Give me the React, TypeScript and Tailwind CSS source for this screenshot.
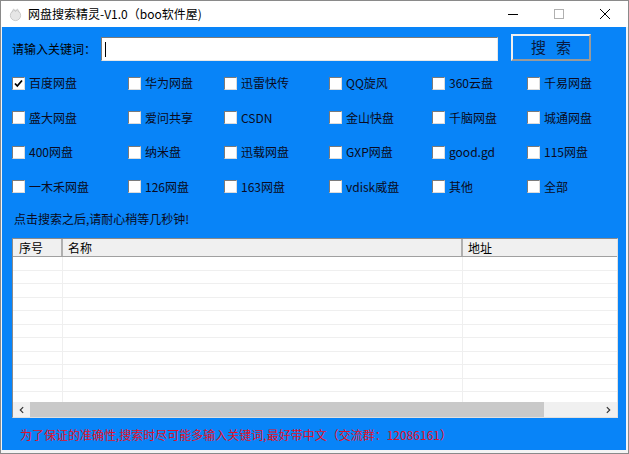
import React from "react";

const rows: string[][] = [
  ["百度网盘", "华为网盘", "迅雷快传", "QQ旋风", "360云盘", "千易网盘"],
  ["盛大网盘", "爱问共享", "CSDN", "金山快盘", "千脑网盘", "城通网盘"],
  ["400网盘", "纳米盘", "迅载网盘", "GXP网盘", "good.gd", "115网盘"],
  ["一木禾网盘", "126网盘", "163网盘", "vdisk威盘", "其他", "全部"],
];

function Box({ checked }: { checked?: boolean }) {
  return (
    <span className="relative inline-block w-[13px] h-[13px] shrink-0 bg-white border border-t-[#7a7a7a] border-l-[#7a7a7a] border-r-[#dcdcdc] border-b-[#dcdcdc]">
      {checked && (
        <svg viewBox="0 0 11 11" className="absolute left-0 top-0 w-[11px] h-[11px]">
          <path d="M2 5.5 L4.3 8 L9 2.5" stroke="#000" strokeWidth="1.8" fill="none" />
        </svg>
      )}
    </span>
  );
}

export default function App() {
  const font = { fontFamily: '"Noto Sans CJK SC", "Noto Sans", sans-serif' };
  return (
    <div className="w-[629px] h-[454px] bg-[#f4f4f4] border border-[#8a8a8a] flex flex-col overflow-hidden" style={font}>
      {/* title bar */}
      <div className="h-[26px] bg-white flex items-center shrink-0">
        <svg viewBox="0 0 16 16" className="w-[15px] h-[15px] ml-[7px] mr-[5px]">
          <circle cx="8" cy="9" r="5.5" fill="#e6e6e6" stroke="#c8c8c8" />
          <path d="M4 6 L6 2 L8 5 L10 2 L12 6" stroke="#c8c8c8" fill="none" />
        </svg>
        <span className="text-[12px] text-black leading-none">网盘搜索精灵-V1.0（boo软件屋)</span>
        <div className="ml-auto flex items-center h-full">
          <div className="w-[46px] h-full flex items-center justify-center">
            <div className="w-[10px] h-px bg-black" />
          </div>
          <div className="w-[46px] h-full flex items-center justify-center">
            <div className="w-[10px] h-[10px] border border-[#b0b0b0]" />
          </div>
          <div className="w-[46px] h-full flex items-center justify-center">
            <svg viewBox="0 0 10 10" className="w-[10px] h-[10px]">
              <path d="M0 0 L10 10 M10 0 L0 10" stroke="#000" strokeWidth="1" />
            </svg>
          </div>
        </div>
      </div>
      {/* client */}
      <div className="flex-1 bg-[#0884f8] ml-[1px] mr-[2px] mb-[3px] flex flex-col px-[10px]">
        <div className="flex items-center h-[40px] pt-[4px]">
          <span className="text-[12px] text-black w-[89px]">请输入关键词：</span>
          <div className="w-[397px] h-[24px] bg-white border border-t-[#7a7a7a] border-l-[#7a7a7a] border-r-[#e8e8e8] border-b-[#e8e8e8] flex items-center pl-[3px]">
            <div className="w-px h-[15px] bg-black" />
          </div>
          <button className="ml-[13px] w-[80px] h-[27px] -mt-[3px] border-2 border-t-[#f0f0f0] border-l-[#f0f0f0] border-r-[#9a9a9a] border-b-[#9a9a9a] bg-[#0884f8] text-[15px] text-[#0a1a40] tracking-[10px] pl-[10px]">
            搜索
          </button>
        </div>
        <div className="flex flex-col -mt-[1px]">
          {rows.map((r, i) => (
            <div key={i} className="grid grid-cols-[116px_96px_105px_103px_95px_1fr] h-[34.5px] items-center">
              {r.map((t, j) => (
                <div key={j} className="flex items-center gap-[4px]">
                  <Box checked={i === 0 && j === 0} />
                  <span className="text-[12px] text-[#0a0a20] leading-none">{t}</span>
                </div>
              ))}
            </div>
          ))}
        </div>
        <div className="text-[12px] text-[#0a0a20] mt-[9px] ml-[2px] leading-none">点击搜索之后,请耐心稍等几秒钟!</div>
        {/* table */}
        <div className="mt-[13px] w-[606px] h-[180px] bg-white border border-[#8a8a8a] border-r-[#e0e0e0] border-b-[#e0e0e0] flex flex-col">
          <div className="h-[18px] bg-[#f0f0f0] border-b border-[#a0a0a0] flex text-[12px] text-black leading-none shrink-0">
            <div className="w-[50px] border-r-2 border-[#b0b0b0] flex items-center pl-[6px]">序号</div>
            <div className="w-[400px] border-r-2 border-[#b0b0b0] flex items-center pl-[5px]">名称</div>
            <div className="flex-1 flex items-center pl-[5px]">地址</div>
          </div>
          <div className="flex-1 relative flex flex-col overflow-hidden">
            {Array.from({ length: 11 }).map((_, k) => (
              <div key={k} className="h-[13.5px] border-b border-[#efefef] flex shrink-0">
                <div className="w-[50px] border-r border-[#efefef]" />
                <div className="w-[400px] border-r border-[#efefef]" />
              </div>
            ))}
          </div>
          <div className="h-[15px] bg-[#f0f0f0] flex items-center shrink-0">
            <div className="w-[17px] h-full flex items-center justify-center">
              <svg viewBox="0 0 6 8" className="w-[5px] h-[8px]">
                <path d="M5 0.5 L1.5 4 L5 7.5" stroke="#333" strokeWidth="1.4" fill="none" />
              </svg>
            </div>
            <div className="w-[514px] h-full bg-[#c9c9c9]" />
            <div className="flex-1" />
            <div className="w-[17px] h-full flex items-center justify-center">
              <svg viewBox="0 0 6 8" className="w-[5px] h-[8px]">
                <path d="M1 0.5 L4.5 4 L1 7.5" stroke="#333" strokeWidth="1.4" fill="none" />
              </svg>
            </div>
          </div>
        </div>
        <div className="text-[12px] text-[#e0102a] mt-[11px] ml-[8px] leading-none">为了保证的准确性,搜索时尽可能多输入关键词,最好带中文（交流群：12086161）</div>
      </div>
    </div>
  );
}
